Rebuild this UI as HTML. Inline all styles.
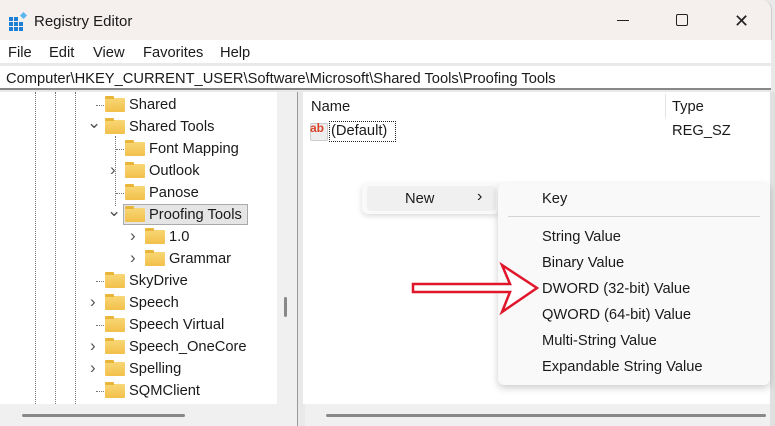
<!DOCTYPE html>
<html><head><style>
*{margin:0;padding:0;box-sizing:border-box}
body{width:775px;height:426px;overflow:hidden;background:#e9e9e9;font-family:"Liberation Sans",sans-serif;font-size:14.7px;color:#1a1a1a;position:relative}
.a{position:absolute;white-space:nowrap}
.t{padding-top:1px}
.f{position:absolute;width:20px;height:14px;background:linear-gradient(#f8d776,#f2c04a);border-radius:1px}
.f:before{content:"";position:absolute;left:0;top:-2px;width:9px;height:3px;background:#e9b63a;border-radius:1px 1px 0 0}
.chev{position:absolute;font-size:17px;color:#555}
.dot{position:absolute;border-left:1px dotted #777}
.hd{position:absolute;border-top:1px dotted #777;width:10px}
</style></head><body>
<div class="a" style="left:0;top:0;width:772px;height:40px;background:#f5efee;border-radius:0 10px 0 0;border-right:1px solid #ccc"></div>
<svg class="a" style="left:8px;top:12px" width="20" height="20" viewBox="0 0 20 20"><g fill="#1e7fd4"><rect x="1" y="5" width="4" height="4"/><rect x="6" y="5" width="4" height="4"/><rect x="1" y="10" width="4" height="4"/><rect x="6" y="10" width="4" height="4"/><rect x="11" y="10" width="4" height="4"/><rect x="1" y="15" width="4" height="4"/><rect x="6" y="15" width="4" height="4"/><rect x="11" y="15" width="4" height="4"/></g><rect x="13" y="1" width="5" height="5" fill="#5cb6f0" transform="rotate(45 15.5 3.5)"/></svg>
<div class="a t" style="left:34px;top:12px;font-size:15px">Registry Editor</div>
<div class="a" style="left:617px;top:20px;width:12px;height:1px;background:#222"></div>
<div class="a" style="left:676px;top:14px;width:12px;height:12px;border:1px solid #222;border-radius:2px"></div>
<div class="a" style="left:734px;top:11px;font-size:18px;color:#222">✕</div>
<div class="a" style="left:0;top:40px;width:771px;height:23px;background:#fff"></div>
<div class="a t" style="left:8px;top:44px">File</div><div class="a t" style="left:49px;top:44px">Edit</div><div class="a t" style="left:93px;top:44px">View</div><div class="a t" style="left:143px;top:44px">Favorites</div><div class="a t" style="left:220px;top:44px">Help</div>
<div class="a" style="left:0;top:66px;width:771px;height:24px;background:#fff;border-bottom:2px solid #888"></div>
<div class="a t" style="left:6px;top:70px">Computer\HKEY_CURRENT_USER\Software\Microsoft\Shared Tools\Proofing Tools</div>
<div class="a" style="left:0;top:92px;width:277px;height:312px;background:#fff"></div>
<div class="a" style="left:277px;top:92px;width:20px;height:312px;background:#f0f0f0"></div>
<div class="a" style="left:284px;top:297px;width:3px;height:20px;background:#888;border-radius:2px"></div>
<div class="a" style="left:297px;top:92px;width:6px;height:334px;background:#e9e9e9;border-left:1px solid #999"></div>
<div class="a" style="left:303px;top:92px;width:467px;height:312px;background:#fff"></div>
<div class="a" style="left:770px;top:92px;width:5px;height:334px;background:#e0e0e0"></div>
<div class="a" style="left:0;top:404px;width:297px;height:22px;background:#f0f0f0"></div>
<div class="a" style="left:22px;top:414px;width:163px;height:3px;background:#888;border-radius:2px"></div>
<div class="a" style="left:305px;top:404px;width:465px;height:22px;background:#f0f0f0"></div>
<div class="a" style="left:326px;top:414px;width:440px;height:3px;background:#888;border-radius:2px"></div>
<div class="dot" style="left:35px;top:92px;height:312px"></div>
<div class="dot" style="left:55px;top:92px;height:312px"></div>
<div class="dot" style="left:75px;top:92px;height:312px"></div>
<div class="dot" style="left:115px;top:136px;height:70px"></div>
<div class="hd" style="left:96px;top:105px"></div><div class="hd" style="left:96px;top:281px"></div><div class="hd" style="left:96px;top:325px"></div><div class="hd" style="left:96px;top:391px"></div>
<div class="hd" style="left:116px;top:149px"></div><div class="hd" style="left:116px;top:193px"></div>
<div class="f" style="left:105px;top:98px"></div><div class="a t" style="left:129px;top:96px">Shared</div>
<div class="chev" style="left:87px;top:113px">⌄</div><div class="f" style="left:105px;top:120px"></div><div class="a t" style="left:129px;top:118px">Shared Tools</div>
<div class="f" style="left:125px;top:142px"></div><div class="a t" style="left:149px;top:140px">Font Mapping</div>
<div class="chev" style="left:110px;top:160px">›</div><div class="f" style="left:125px;top:164px"></div><div class="a t" style="left:149px;top:162px">Outlook</div>
<div class="f" style="left:125px;top:186px"></div><div class="a t" style="left:149px;top:184px">Panose</div>
<div class="a" style="left:123px;top:204px;width:125px;height:21px;background:#e5e5e5;border:1px solid #aaa"></div>
<div class="chev" style="left:107px;top:201px">⌄</div><div class="f" style="left:125px;top:208px"></div><div class="a t" style="left:149px;top:206px">Proofing Tools</div>
<div class="chev" style="left:130px;top:226px">›</div><div class="f" style="left:145px;top:230px"></div><div class="a t" style="left:169px;top:228px">1.0</div>
<div class="chev" style="left:130px;top:248px">›</div><div class="f" style="left:145px;top:252px"></div><div class="a t" style="left:169px;top:250px">Grammar</div>
<div class="f" style="left:105px;top:274px"></div><div class="a t" style="left:129px;top:272px">SkyDrive</div>
<div class="chev" style="left:90px;top:292px">›</div><div class="f" style="left:105px;top:296px"></div><div class="a t" style="left:129px;top:294px">Speech</div>
<div class="f" style="left:105px;top:318px"></div><div class="a t" style="left:129px;top:316px">Speech Virtual</div>
<div class="chev" style="left:90px;top:336px">›</div><div class="f" style="left:105px;top:340px"></div><div class="a t" style="left:129px;top:338px">Speech_OneCore</div>
<div class="chev" style="left:90px;top:358px">›</div><div class="f" style="left:105px;top:362px"></div><div class="a t" style="left:129px;top:360px">Spelling</div>
<div class="f" style="left:105px;top:384px"></div><div class="a t" style="left:129px;top:382px">SQMClient</div>
<div class="a t" style="left:311px;top:98px">Name</div>
<div class="a" style="left:665px;top:94px;width:1px;height:24px;background:#e5e5e5"></div>
<div class="a t" style="left:672px;top:98px">Type</div>
<div class="a" style="left:310px;top:123px;width:18px;height:18px;background:#eee;border:1px solid #ccc;border-radius:2px"></div>
<div class="a" style="left:310px;top:121px;font-size:12px;font-weight:bold;color:#d9442a">ab</div>
<div class="a" style="left:329px;top:121px;width:67px;height:21px;border:1px dotted #222"></div>
<div class="a t" style="left:331px;top:122px">(Default)</div>
<div class="a t" style="left:672px;top:122px">REG_SZ</div>
<div class="a" style="left:362px;top:183px;width:138px;height:31px;background:#f9f9f9;border-radius:6px;box-shadow:0 2px 6px rgba(0,0,0,.15)"></div>
<div class="a" style="left:367px;top:186px;width:129px;height:25px;background:#f0f0f0;border-radius:4px"></div>
<div class="a t" style="left:405px;top:190px">New</div><div class="a" style="left:477px;top:188px;font-size:16px">›</div>
<div class="a" style="left:498px;top:183px;width:272px;height:202px;background:#f9f9f9;border-radius:6px;box-shadow:0 3px 8px rgba(0,0,0,.2)"></div>
<div class="a" style="left:508px;top:216px;width:252px;height:1px;background:#d5d5d5"></div>
<div class="a t" style="left:542px;top:190px">Key</div>
<div class="a t" style="left:542px;top:228px">String Value</div>
<div class="a t" style="left:542px;top:254px">Binary Value</div>
<div class="a t" style="left:542px;top:280px">DWORD (32-bit) Value</div>
<div class="a t" style="left:542px;top:306px">QWORD (64-bit) Value</div>
<div class="a t" style="left:542px;top:332px">Multi-String Value</div>
<div class="a t" style="left:542px;top:358px">Expandable String Value</div>
<svg class="a" style="left:410px;top:260px" width="130" height="60"><path d="M3 24 H100 L92 5 L127 28 L92 52 L100 32 H3 Z" fill="#fff" stroke="#e0162b" stroke-width="2.5" stroke-linejoin="miter"/></svg>
</body></html>
